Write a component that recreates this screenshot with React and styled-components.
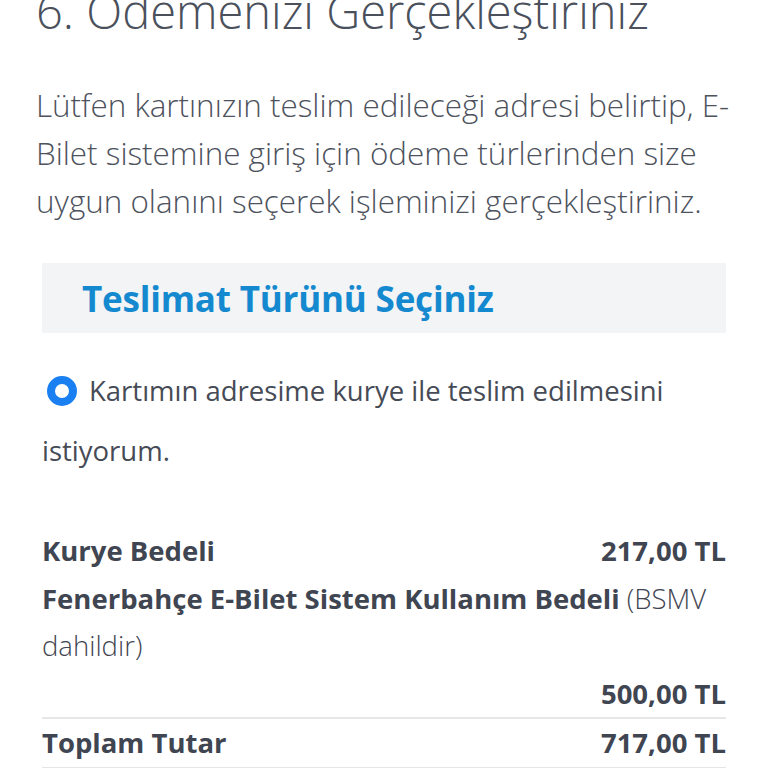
import styled, { createGlobalStyle } from 'styled-components'

const Global = createGlobalStyle`
    html, body {
        margin: 0;
        padding: 0;
        background: #fff;
    }
    body {
        font-family: "Open Sans", "Noto Sans", sans-serif;
        color: #454b57;
        overflow: hidden;
    }
`
const Page = styled.div`
    width: 768px;
    height: 768px;
    overflow: hidden;
    padding: 0 42px 0 36px;
    box-sizing: border-box;
`
const Title = styled.h1`
    font-size: 47px;
    font-weight: 300;
    line-height: 60px;
    margin: -19px 0 0;
    color: #4a505c;
    white-space: nowrap;
`
const Lead = styled.p`
    font-size: 31.4px;
    font-weight: 300;
    line-height: 48px;
    margin: 40px -12px 0 0;
    color: #4d525d;
`
const Panel = styled.div`
    margin: 0 0 0 6px;
`
const Banner = styled.div`
    margin-top: 38px;
    height: 70px;
    display: flex;
    align-items: center;
    padding-left: 40px;
    background: #f2f4f5;
`
const BannerTitle = styled.h2`
    margin: 0;
    font-size: 35px;
    font-weight: 700;
    color: #1589cf;
    letter-spacing: -0.2px;
`
const Choice = styled.label`
    display: block;
    margin-top: 28px;
    font-size: 27.5px;
    line-height: 60px;
    color: #464b56;
`
const Radio = styled.span`
    display: inline-block;
    width: 30px;
    height: 30px;
    box-sizing: border-box;
    border: 8px solid #1a7ff0;
    border-radius: 50%;
    background: #fff;
    vertical-align: -5px;
    margin: 0 12px 0 5px;
`
const Costs = styled.div`
    margin-top: 46px;
    font-size: 27.5px;
    line-height: 47.5px;
    color: #3f4551;
`
const Row = styled.div`
    display: flex;
    justify-content: space-between;
    align-items: baseline;
    border-bottom: ${({ $line }) => ($line ? '2px solid #e4e6e8' : 'none')};
`
const Label = styled.span`
    font-weight: 700;
`
const Note = styled.span`
    font-weight: 300;
`
const Amount = styled.span`
    font-weight: 700;
    margin-left: auto;
`
const Wrap = styled.p`
    margin: 0;
`

const App = () => <>
    <Global />
    <Page>
        <Title>6. Ödemenizi Gerçekleştiriniz</Title>
        <Lead>Lütfen kartınızın teslim edileceği adresi belirtip, E-Bilet sistemine giriş için ödeme türlerinden size uygun olanını seçerek işleminizi gerçekleştiriniz.</Lead>
        <Panel>
            <Banner>
                <BannerTitle>Teslimat Türünü Seçiniz</BannerTitle>
            </Banner>
            <Choice>
                <Radio />Kartımın adresime kurye ile teslim edilmesini istiyorum.
            </Choice>
            <Costs>
                <Row>
                    <Label>Kurye Bedeli</Label>
                    <Amount>217,00 TL</Amount>
                </Row>
                <Wrap>
                    <Label>Fenerbahçe E-Bilet Sistem Kullanım Bedeli</Label> <Note>(BSMV dahildir)</Note>
                </Wrap>
                <Row $line>
                    <Amount>500,00 TL</Amount>
                </Row>
                <Row $line>
                    <Label>Toplam Tutar</Label>
                    <Amount>717,00 TL</Amount>
                </Row>
            </Costs>
        </Panel>
    </Page>
</>

export default App
